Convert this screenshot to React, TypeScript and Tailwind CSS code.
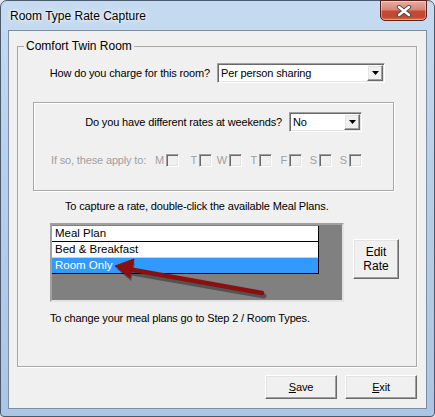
import type { ReactNode } from "react";

const sunken =
  "border border-t-[#a0a0a0] border-l-[#a0a0a0] border-b-white border-r-white shadow-[inset_1px_1px_0_#696969,inset_-1px_-1px_0_#e3e3e3]";
const raised =
  "border border-t-white border-l-white border-b-[#696969] border-r-[#696969] shadow-[inset_-1px_-1px_0_#a0a0a0,inset_1px_1px_0_#e3e3e3] bg-[#f0f0f0]";

function Combo({ value, width }: { value: string; width: string }) {
  return (
    <div className={`flex h-[20px] items-stretch bg-white ${sunken} ${width}`}>
      <div className="flex flex-1 items-center pl-[3px] text-[11px] leading-none text-black">{value}</div>
      <div className={`m-[1px] flex w-[16px] items-center justify-center ${raised}`}>
        <svg width="7" height="4" viewBox="0 0 7 4">
          <path d="M0 0h7L3.5 4z" fill="#000" />
        </svg>
      </div>
    </div>
  );
}

function Check({ letter, width }: { letter: string; width: string }) {
  return (
    <div className={`flex items-center justify-end gap-[2px] ${width}`}>
      <span className="text-[#a0a0a0]">{letter}</span>
      <span className={`block h-[13px] w-[13px] bg-[#f0f0f0] ${sunken}`} />
    </div>
  );
}

function Button({ children, className }: { children: ReactNode; className: string }) {
  return (
    <button type="button" className={`flex flex-col items-center justify-center text-black ${raised} ${className}`}>
      {children}
    </button>
  );
}

export default function App() {
  return (
    <div className="relative h-[417px] w-[435px] overflow-hidden bg-[#dfe6ee] font-['Liberation_Sans',Arial,sans-serif] text-[11px] leading-[14px] tracking-[-0.15px] text-black">
      <div className="flex h-full w-full flex-col rounded-t-[7px] rounded-b-[4px] border border-[#4a5a6c] bg-[linear-gradient(180deg,#c6dbf1_0%,#b7d0ea_40%,#aac6e4_100%)] px-[7px]">
        {/* title bar */}
        <div className="relative flex h-[29px] items-start justify-between">
          <div className="pl-[2px] pt-[7px] text-[12px] leading-[16px] tracking-normal text-black [text-shadow:0_0_6px_#fff,0_0_3px_#fff]">
            Room Type Rate Capture
          </div>
          <div className="-mt-px flex h-[21px] w-[47px] items-center justify-center rounded-b-[5px] border border-[#5c211a] bg-[linear-gradient(180deg,#e9ada1_0%,#d98676_45%,#c24a34_55%,#c5472f_85%,#d9735c_100%)] shadow-[inset_0_0_0_1px_rgba(255,255,255,0.35)]">
            <svg width="16" height="12" viewBox="0 0 16 12">
              <path d="M3 2l10 8M13 2L3 10" stroke="#4a4a4a" strokeWidth="4.2" strokeLinecap="round" />
              <path d="M3 2l10 8M13 2L3 10" stroke="#fff" strokeWidth="2.4" strokeLinecap="round" />
            </svg>
          </div>
        </div>

        {/* client area */}
        <div className="flex h-[379px] flex-col border border-[#7d8ea2] bg-[#f0f0f0]">
          <fieldset className="ml-[8px] mr-[9px] mt-[8px] h-[328px] border border-[#a8a8a8] shadow-[1px_1px_0_#fff]">
            <legend className="ml-[6px] px-[2px] text-[12px] leading-[14px] tracking-normal">Comfort Twin Room</legend>

            <div className="mt-[10px] flex items-center">
              <div className="w-[192px] whitespace-nowrap text-right">How do you charge for this room?</div>
              <Combo value="Per person sharing" width="ml-[7px] w-[168px]" />
            </div>

            <div className="ml-[15px] mt-[19px] h-[89px] w-[361px] border border-[#a8a8a8] pt-[9px] shadow-[1px_1px_0_#fff,inset_1px_1px_0_#fff]">
              <div className="flex items-center">
                <div className="w-[248px] whitespace-nowrap text-right">Do you have different rates at weekends?</div>
                <Combo value="No" width="ml-[7px] w-[73px]" />
              </div>
              <div className="mt-[21px] flex items-center pl-[17px] text-[#a0a0a0]">
                <div className="w-[98px] whitespace-nowrap">If so, these apply to:</div>
                <Check letter="M" width="w-[30px]" />
                <Check letter="T" width="w-[33px]" />
                <Check letter="W" width="w-[30px]" />
                <Check letter="T" width="w-[30px]" />
                <Check letter="F" width="w-[30px]" />
                <Check letter="S" width="w-[30px]" />
                <Check letter="S" width="w-[30px]" />
              </div>
            </div>

            <div className="ml-[47px] mt-[8px] whitespace-nowrap">To capture a rate, double-click the available Meal Plans.</div>

            <div className="mt-[10px] flex items-start">
              <div className="ml-[32px] h-[79px] w-[294px] border-2 border-t-[#a0a0a0] border-l-[#a0a0a0] border-b-[#e3e3e3] border-r-[#e3e3e3] bg-[#808080] pt-px">
                <div className="w-[267px] border-r border-black text-[11.5px] leading-[15px] tracking-normal">
                  <div className="h-[16px] border-b border-black bg-white pl-[3px]">Meal Plan</div>
                  <div className="h-[16px] border-b border-[#cfcfcf] bg-white pl-[3px]">Bed &amp; Breakfast</div>
                  <div className="h-[16px] border-b border-black bg-[#3399ff] pl-[3px] text-white">Room Only</div>
                </div>
              </div>
              <Button className="ml-[9px] mt-[16px] h-[40px] w-[46px] text-[12px] leading-[14px] tracking-normal">
                <span>Edit</span>
                <span>Rate</span>
              </Button>
            </div>

            <div className="ml-[32px] mt-[9px] whitespace-nowrap">To change your meal plans go to Step 2 / Room Types.</div>
          </fieldset>

          <div className="mr-[9px] mt-[8px] flex justify-end gap-[8px]">
            <Button className="h-[24px] w-[72px]">
              <span>
                <span className="underline">S</span>ave
              </span>
            </Button>
            <Button className="h-[24px] w-[72px]">
              <span>
                <span className="underline">E</span>xit
              </span>
            </Button>
          </div>
        </div>
      </div>

      {/* annotation arrow */}
      <svg className="pointer-events-none absolute inset-0" width="435" height="417" viewBox="0 0 435 417">
        <g transform="translate(2 3)" opacity="0.35">
          <path d="M262 293L130 270" stroke="#000" strokeWidth="5" strokeLinecap="round" />
          <path d="M115 266L133 260L129 278z" fill="#000" />
        </g>
        <path d="M262 293L128 269" stroke="#8a0f0f" strokeWidth="4.5" strokeLinecap="round" />
        <path d="M115 266L134 259L130 278z" fill="#8a0f0f" stroke="#8a0f0f" strokeWidth="1" strokeLinejoin="round" />
      </svg>
    </div>
  );
}
